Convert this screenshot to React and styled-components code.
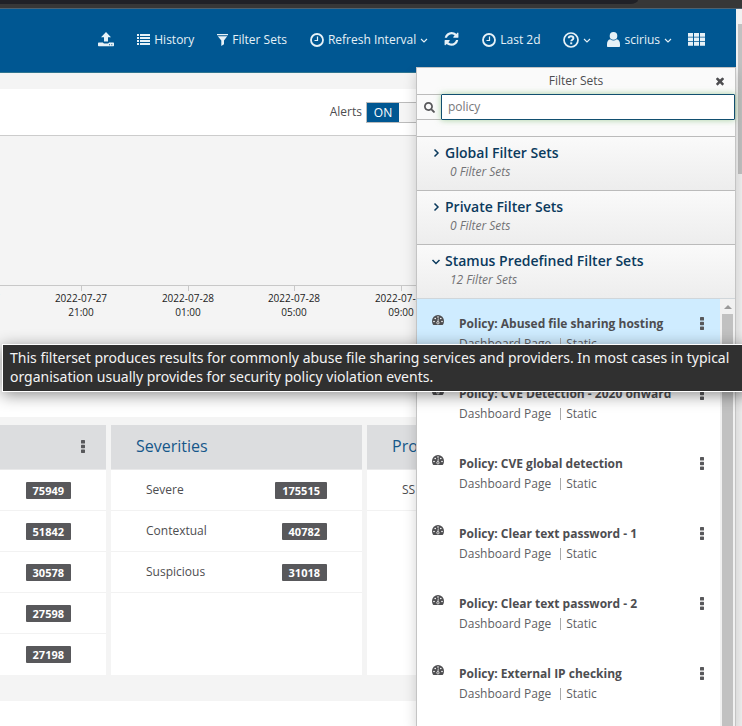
import React, { useState } from "react";
import styled, { createGlobalStyle } from "styled-components";
import { FaSearch } from "react-icons/fa";

const GlobalStyle = createGlobalStyle`
  * {
    box-sizing: border-box;
  }

  body {
    margin: 0;
    background: #fff;
    color: #4d4d50;
    font-family: "Open Sans", "Liberation Sans", sans-serif;
    font-size: 12px;
    line-height: 20px;
  }

  button,
  input {
    font: inherit;
    color: inherit;
  }
`;

const Shell = styled.div`
  position: relative;
  display: flex;
  flex-direction: column;
  min-height: 100vh;
  overflow: hidden;
`;

const BrowserEdge = styled.div`
  height: 9px;
  background: #373737;
  border-bottom: 1px solid #4e6270;
`;

const TabStrip = styled.div`
  width: 86%;
  height: 4px;
  background: #202127;
  border-bottom-right-radius: 8px 4px;
`;

const Viewport = styled.div`
  display: flex;
  flex: 1;
`;

const Page = styled.div`
  position: relative;
  flex: 1;
  min-width: 0;
  background: #fff;
`;

const Navbar = styled.nav`
  display: flex;
  align-items: center;
  justify-content: flex-end;
  gap: 23px;
  height: 64px;
  padding: 0 31px 2px 0;
  background: #005792;
  border-bottom: 1px solid #2f7590;
`;

const NavGroup = styled.div`
  display: flex;
  align-items: center;
  gap: 16px;
`;

const NavButton = styled.button`
  display: flex;
  align-items: center;
  gap: 4px;
  padding: 0;
  border: 0;
  background: none;
  color: #e6f1f7;
  white-space: nowrap;
  cursor: pointer;
`;

const Toolbar = styled.div`
  display: flex;
  align-items: center;
  justify-content: flex-end;
  height: 63px;
  padding-right: 306px;
  border-top: 16px solid #f4f4f4;
  border-bottom: 1px solid #ccc;
`;

const SwitchLabel = styled.label`
  display: flex;
  align-items: center;
  gap: 4px;
  cursor: pointer;
`;

const SwitchInput = styled.input`
  appearance: none;
  width: 64px;
  height: 21px;
  margin: 0;
  border: 1px solid #bbb;
  background: #f5f5f5;

  &::before {
    content: "${(props) => (props.checked ? "ON" : "OFF")}";
    display: block;
    width: 32px;
    height: 19px;
    line-height: 19px;
    margin-left: ${(props) => (props.checked ? "0" : "30px")};
    background: ${(props) => (props.checked ? "#005792" : "#ddd")};
    color: ${(props) => (props.checked ? "#fff" : "#4d4d50")};
    text-align: center;
  }
`;

const Timeline = styled.section`
  height: 234px;
  padding-top: 149px;
  background: #f4f4f4;

  svg {
    display: block;
    width: 100%;
    height: 44px;
  }

  text {
    font-size: 10px;
    fill: #222;
    text-anchor: middle;
  }
`;

const Cards = styled.section`
  display: grid;
  grid-template-columns: 106px 251px 1fr;
  gap: 5px;
  margin-top: 47px;
  padding: 8px 0 26px;
  background: #f4f4f4;
`;

const Card = styled.article`
  background: #fff;
`;

const CardHeader = styled.header`
  display: flex;
  align-items: center;
  justify-content: space-between;
  height: 45px;
  padding: 0 21px 2px 25px;
  background: #dcdddf;
  border-bottom: 1px solid #e9e9ea;
`;

const CardTitle = styled.h2`
  margin: 0;
  color: #15578a;
  font-size: 16px;
  font-weight: 400;
`;

const CardRow = styled.div`
  display: flex;
  align-items: center;
  justify-content: space-between;
  height: 41px;
  padding: 0 35px 0 25px;
  border-bottom: 1px solid #f2f2f2;

  &:nth-child(6) {
    border-bottom: 0;
  }
`;

const RowLabel = styled.span`
  padding-left: 10px;
`;

const Count = styled.span`
  margin-left: auto;
  padding: 0 7px;
  border-radius: 1px;
  background: #58585b;
  color: #fff;
  font-size: 11px;
  font-weight: 700;
  line-height: 17px;
`;

const KebabButton = styled.button`
  display: flex;
  padding: 0;
  border: 0;
  background: none;
  color: #58585b;
  cursor: pointer;
`;

const Drawer = styled.aside`
  position: absolute;
  top: 58px;
  right: 0;
  bottom: 0;
  display: flex;
  flex-direction: column;
  width: 320px;
  background: #fff;
  border: 1px solid #c4c4c4;
  border-width: 1px 1px 0;
  box-shadow: 0 6px 12px rgba(0, 0, 0, 0.18);
`;

const DrawerHeader = styled.header`
  display: grid;
  grid-template-columns: 24px 1fr 24px;
  align-items: center;
  height: 26px;
  padding: 0 3px;
  background: #fafafa;
  text-align: center;
`;

const DrawerTitle = styled.h2`
  grid-column: 2;
  margin: 0;
  font-size: 12px;
  font-weight: 400;
`;

const CloseButton = styled.button`
  display: flex;
  align-items: center;
  justify-content: center;
  padding: 0;
  border: 0;
  background: none;
  color: #4d4d50;
  cursor: pointer;
`;

const SearchRow = styled.div`
  display: flex;
  height: 42px;
  padding-bottom: 16px;
  background: #fafafa;
`;

const SearchAddon = styled.label`
  display: flex;
  align-items: center;
  justify-content: center;
  width: 24px;
  border: 1px solid #bbb;
  border-width: 1px 0;
  color: #58585b;
`;

const SearchInput = styled.input`
  flex: 1;
  min-width: 0;
  padding: 0 6px;
  border: 1px solid #124f70;
  border-radius: 1px;
  outline: 0;
  background: #fff;
  box-shadow: 0 0 6px rgba(110, 180, 100, 0.6);
  color: #77777a;
  caret-color: #333;
`;

const GroupButton = styled.button`
  display: grid;
  grid-template-columns: 14px 1fr;
  align-items: center;
  flex-shrink: 0;
  padding: 6px 14px 9px;
  border: 0;
  border-top: 1px solid #bbb;
  background: linear-gradient(#fafafa, #ededed);
  color: #0b3a5d;
  text-align: left;
  cursor: pointer;
`;

const GroupTitle = styled.span`
  font-size: 14px;
  font-weight: 600;
  line-height: 20px;
`;

const GroupCount = styled.span`
  grid-column: 2;
  padding-left: 5px;
  color: #727275;
  font-style: italic;
  line-height: 18px;
`;

const ListArea = styled.div`
  display: flex;
  flex: 1;
  border-top: 1px solid #d0d6da;
`;

const List = styled.ul`
  flex: 1;
  min-width: 0;
  margin: 0;
  padding: 0;
  list-style: none;
`;

const ListItem = styled.li`
  display: grid;
  grid-template-columns: 27px 1fr 20px;
  align-items: start;
  height: 70px;
  padding: 15px 8px 0 15px;
  background: ${(props) => (props.$active ? "#cfecff" : "#fff")};
`;

const ItemName = styled.div`
  font-weight: 700;
`;

const ItemMeta = styled.div`
  display: flex;
  align-items: center;
  gap: 9px;
  color: #606063;
`;

const ItemKind = styled.span`
  padding-left: 5px;
  border-left: 1px solid #aaa;
  line-height: 12px;
`;

const ItemMenu = styled(KebabButton)`
  justify-self: center;
  padding-top: 3px;
`;

const ScrollTrack = styled.div`
  display: flex;
  flex-direction: column;
  align-items: center;
  width: 15px;
  background: #f1f1f1;
`;

const ScrollArrow = styled.div`
  height: 0;
  margin: 6px 0 5px;
  border: 4px solid transparent;
  border-top-width: 0;
  border-bottom-color: #999;
`;

const ScrollThumb = styled.div`
  flex: 1;
  width: 11px;
  background: #c1c1c1;
`;

const PageScroll = styled.div`
  width: 6px;
  padding: 15px 0 0 2px;
  background: #f1f1f1;
`;

const PageThumb = styled.div`
  height: 150px;
  background: #c1c1c1;
`;

const Tooltip = styled.div`
  position: absolute;
  top: 344px;
  left: 2px;
  right: -8px;
  padding: 3px 7px 5px;
  border: 1px solid #fff;
  background: #303030;
  color: #f4f4f4;
  box-shadow: 0 3px 16px rgba(0, 0, 0, 0.45);
  font-family: "Noto Sans", sans-serif;
  font-size: 14px;
  line-height: 19px;
  white-space: nowrap;
`;

function UploadIcon() {
  return (
    <svg width="16" height="16" viewBox="0 0 16 16" fill="currentColor" aria-hidden="true">
      <path d="M8 0l5 5.200H10V9.500H6V5.200H3z" />
      <path d="M.7 10.500H5c.2.700.9 1 1.900 1h2.200c1 0 1.700-.3 1.900-1h4.300c.4 0 .7.300.7.700v2.400c0 .4-.3.700-.7.700H.7c-.4 0-.7-.3-.7-.7v-2.400c0-.4.3-.7.7-.7zM11 12.200v1h1v-1zm2.300 0v1h1v-1z" fillRule="evenodd" />
    </svg>
  );
}

function ListIcon() {
  return (
    <svg width="13" height="13" viewBox="0 0 13 13" fill="currentColor" aria-hidden="true">
      {[1, 4, 7, 10].map((y) => (
        <path key={y} d={`M0 ${y}h2v2H0zM3 ${y}h10v2H3z`} />
      ))}
    </svg>
  );
}

function FilterIcon() {
  return (
    <svg width="11" height="12" viewBox="0 0 11 12" fill="currentColor" aria-hidden="true">
      <path d="M0 0h11v1.300H0zM.8 2.200h9.400L7 6.600v3.600L4.300 12V6.600z" />
    </svg>
  );
}

function ClockIcon() {
  return (
    <svg width="14" height="14" viewBox="0 0 14 14" fill="none" stroke="currentColor" aria-hidden="true">
      <circle cx="7" cy="7" r="6" strokeWidth="1.800" />
      <path d="M7.500 3.500v4h-3" strokeWidth="1.200" />
    </svg>
  );
}

function RefreshIcon() {
  return (
    <svg width="15" height="15" viewBox="0 0 1536 1664" fill="currentColor" aria-hidden="true">
      <path d="M1511 928q0 5-1 7-64 268-268 434.500t-478 166.500q-146 0-282.500-55t-243.500-157l-129 129q-19 19-45 19t-45-19-19-45v-448q0-26 19-45t45-19h448q26 0 45 19t19 45-19 45l-137 137q71 66 161 102t187 36q134 0 250-65t186-179q11-17 53-117 8-23 30-23h192q13 0 22.500 9.500t9.500 22.500zm25-800v448q0 26-19 45t-45 19h-448q-26 0-45-19t-19-45 19-45l138-138q-148-137-349-137-134 0-250 65t-186 179q-11 17-53 117-8 23-30 23h-199q-13 0-22.500-9.500t-9.500-22.500v-7q65-268 270-434.500t480-166.500q146 0 284 55.500t245 156.500l130-129q19-19 45-19t45 19 19 45z" />
    </svg>
  );
}

function HelpIcon() {
  return (
    <svg width="16" height="16" viewBox="0 0 16 16" fill="none" stroke="currentColor" aria-hidden="true">
      <circle cx="8" cy="8" r="7" strokeWidth="1.700" />
      <path d="M5.700 6.300c.1-1.400 1-2 2.300-2s2.400.7 2.400 1.900c0 1.500-2.200 1.500-2.200 3.100" strokeWidth="1.900" />
      <path d="M7.200 11.300h2" strokeWidth="1.900" />
    </svg>
  );
}

function UserIcon() {
  return (
    <svg width="13" height="15" viewBox="0 0 13 15" fill="currentColor" aria-hidden="true">
      <circle cx="6.500" cy="3.900" r="3.800" />
      <path d="M3.300 7.200c2 1.600 4.400 1.600 6.400 0C12 7.700 13 9.500 13 12.500V14c0 .6-.4 1-1 1H1c-.6 0-1-.4-1-1v-1.500c0-3 1-4.800 3.300-5.300z" />
    </svg>
  );
}

function GridIcon() {
  return (
    <svg width="17" height="13" viewBox="0 0 17 13" fill="currentColor" aria-hidden="true">
      {[0, 4.500, 9].map((y) => (
        <path key={y} d={`M0 ${y}h5v3.700H0zM6 ${y}h5v3.700H6zM12 ${y}h5v3.700h-5z`} />
      ))}
    </svg>
  );
}

function CaretIcon() {
  return (
    <svg width="8" height="8" viewBox="0 0 8 8" fill="none" stroke="currentColor" aria-hidden="true">
      <path d="M1 3l3 3 3-3" strokeWidth="1.100" />
    </svg>
  );
}

function GroupArrow({ open }) {
  return (
    <svg width="10" height="10" viewBox="0 0 10 10" fill="none" stroke="currentColor" aria-hidden="true">
      <path d={open ? "M1.500 4l3.500 3.500L8.500 4" : "M3.500 1.500L7 5 3.500 8.500"} strokeWidth="1.500" />
    </svg>
  );
}

function DashboardIcon() {
  return (
    <svg width="12" height="12" viewBox="0 0 12 12" aria-hidden="true">
      <path d="M0 7a6 6 0 0 1 12 0c0 1.500-.3 2.700-.9 3.600-.2.300-.4.400-.7.400H1.600c-.3 0-.5-.1-.7-.4C.3 9.700 0 8.500 0 7z" fill="#4d4d50" />
      <g fill="#fff">
        <circle cx="2" cy="7.500" r=".8" />
        <circle cx="3.200" cy="4.500" r=".8" />
        <circle cx="6" cy="3" r=".8" />
        <circle cx="8.800" cy="4.500" r=".8" />
        <circle cx="10" cy="7.500" r=".8" />
      </g>
      <path d="M6.300 4.500L5.900 8" stroke="#fff" strokeWidth=".7" />
      <circle cx="5.900" cy="8.800" r="1.200" fill="none" stroke="#fff" strokeWidth=".7" />
    </svg>
  );
}

function CloseIcon() {
  return (
    <svg width="12" height="12" viewBox="0 0 1792 1792" fill="currentColor" aria-hidden="true">
      <path d="M1490 1322q0 40-28 68l-136 136q-28 28-68 28t-68-28l-294-294-294 294q-28 28-68 28t-68-28l-136-136q-28-28-28-68t28-68l294-294-294-294q-28-28-28-68t28-68l136-136q28-28 68-28t68 28l294 294 294-294q28-28 68-28t68 28l136 136q28 28 28 68t-28 68l-294 294 294 294q28 28 28 68z" />
    </svg>
  );
}

function KebabIcon() {
  return (
    <svg width="4" height="13" viewBox="0 0 4 13" fill="currentColor" aria-hidden="true">
      {[0, 4.700, 9.400].map((y) => (
        <rect key={y} y={y} width="4" height="3.500" rx=".6" />
      ))}
    </svg>
  );
}

const ticks = [
  { x: -26, date: "2022-07-27", time: "17:00" },
  { x: 81, date: "2022-07-27", time: "21:00" },
  { x: 188, date: "2022-07-28", time: "01:00" },
  { x: 294, date: "2022-07-28", time: "05:00" },
  { x: 401, date: "2022-07-28", time: "09:00" },
];

const cards = [
  { title: "", menu: true, rows: [["", 75949], ["", 51842], ["", 30578], ["", 27598], ["", 27198]] },
  { title: "Severities", rows: [["Severe", 175515], ["Contextual", 40782], ["Suspicious", 31018]] },
  { title: "Pro", rows: [["SS"]] },
];

const groups = [
  { title: "Global Filter Sets", count: 0 },
  { title: "Private Filter Sets", count: 0 },
  { title: "Stamus Predefined Filter Sets", count: 12, open: true },
];

const filterSets = [
  "Policy: Abused file sharing hosting",
  "Policy: CVE Detection - 2020 onward",
  "Policy: CVE global detection",
  "Policy: Clear text password - 1",
  "Policy: Clear text password - 2",
  "Policy: External IP checking",
];

function TopNav() {
  return (
    <Navbar>
      <NavButton aria-label="Upload">
        <UploadIcon />
      </NavButton>
      <NavButton>
        <ListIcon />
        History
      </NavButton>
      <NavButton>
        <FilterIcon />
        Filter Sets
      </NavButton>
      <NavGroup>
        <NavButton>
          <ClockIcon />
          Refresh Interval
          <CaretIcon />
        </NavButton>
        <NavButton aria-label="Refresh">
          <RefreshIcon />
        </NavButton>
      </NavGroup>
      <NavButton>
        <ClockIcon />
        Last 2d
      </NavButton>
      <NavGroup>
        <NavButton aria-label="Help">
          <HelpIcon />
          <CaretIcon />
        </NavButton>
        <NavButton>
          <UserIcon />
          scirius
          <CaretIcon />
        </NavButton>
        <NavButton aria-label="Applications">
          <GridIcon />
        </NavButton>
      </NavGroup>
    </Navbar>
  );
}

function FilterSetsDrawer() {
  const [query, setQuery] = useState("policy");

  return (
    <Drawer>
      <DrawerHeader>
        <DrawerTitle>Filter Sets</DrawerTitle>
        <CloseButton aria-label="Close">
          <CloseIcon />
        </CloseButton>
      </DrawerHeader>
      <SearchRow>
        <SearchAddon htmlFor="filter-search" aria-label="Search filter sets">
          <FaSearch size={11} />
        </SearchAddon>
        <SearchInput
          id="filter-search"
          autoFocus
          value={query}
          onChange={(e) => setQuery(e.target.value)}
        />
      </SearchRow>
      {groups.map((group) => (
        <GroupButton key={group.title} aria-expanded={!!group.open}>
          <GroupArrow open={group.open} />
          <GroupTitle>{group.title}</GroupTitle>
          <GroupCount>{group.count} Filter Sets</GroupCount>
        </GroupButton>
      ))}
      <ListArea>
        <List>
          {filterSets.map((name, index) => (
            <ListItem key={name} $active={index === 0}>
              <DashboardIcon />
              <div>
                <ItemName>{name}</ItemName>
                <ItemMeta>
                  Dashboard Page
                  <ItemKind>Static</ItemKind>
                </ItemMeta>
              </div>
              <ItemMenu aria-label={`${name} menu`}>
                <KebabIcon />
              </ItemMenu>
            </ListItem>
          ))}
        </List>
        <ScrollTrack>
          <ScrollArrow />
          <ScrollThumb />
        </ScrollTrack>
      </ListArea>
    </Drawer>
  );
}

function App() {
  const [alerts, setAlerts] = useState(true);

  return (
    <Shell>
      <GlobalStyle />
      <BrowserEdge>
        <TabStrip />
      </BrowserEdge>
      <Viewport>
        <Page>
          <TopNav />
          <Toolbar>
            <SwitchLabel>
              Alerts
              <SwitchInput
                type="checkbox"
                role="switch"
                checked={alerts}
                onChange={(e) => setAlerts(e.target.checked)}
              />
            </SwitchLabel>
          </Toolbar>
          <Timeline>
            <svg>
              <line x1="0" x2="100%" y1="0.5" y2="0.5" stroke="#c8c8c8" />
              {ticks.map((tick) => (
                <g key={tick.x}>
                  <path d={`M${tick.x}.5 0v6`} stroke="#c8c8c8" />
                  <text x={tick.x} y="17">{tick.date}</text>
                  <text x={tick.x} y="31">{tick.time}</text>
                </g>
              ))}
            </svg>
          </Timeline>
          <Cards>
            {cards.map((card) => (
              <Card key={card.title}>
                <CardHeader>
                  <CardTitle>{card.title}</CardTitle>
                  {card.menu && (
                    <KebabButton aria-label="Card menu">
                      <KebabIcon />
                    </KebabButton>
                  )}
                </CardHeader>
                {card.rows.map(([label, count]) => (
                  <CardRow key={label + count}>
                    {label && <RowLabel>{label}</RowLabel>}
                    {count && <Count>{count}</Count>}
                  </CardRow>
                ))}
              </Card>
            ))}
          </Cards>
          <FilterSetsDrawer />
        </Page>
        <PageScroll>
          <PageThumb />
        </PageScroll>
      </Viewport>
      <Tooltip role="tooltip">
        This filterset produces results for commonly abuse file sharing services and providers. In most cases in typical
        <br />
        organisation usually provides for security policy violation events.
      </Tooltip>
    </Shell>
  );
}

export default App;
